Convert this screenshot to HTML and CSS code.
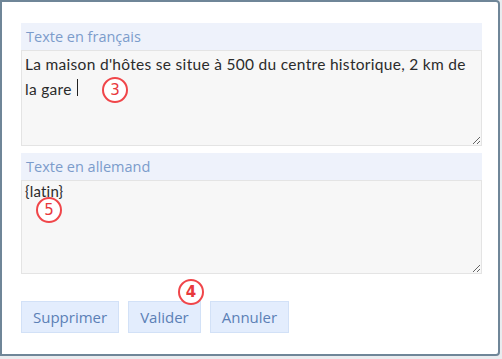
FILE: index.html
```
<!DOCTYPE html>
<html lang="fr">
<head>
    <meta charset="UTF-8" />
    <meta name="viewport" content="width=device-width, initial-scale=1.0"/>
    <title>Traduction</title>
    <link rel="stylesheet" href="styles.css">
</head>
<body>
<div class="dialog">
    <div class="field">
        <label class="field-label" for="fr">Texte en français</label>
        <div class="area-wrap">
            <textarea id="fr" class="area">La maison d'hôtes se situe à 500 du centre historique, 2 km de la gare</textarea>
            <span class="caret"></span>
            <span class="marker m3">3</span>
        </div>
    </div>
    <div class="field">
        <label class="field-label" for="de">Texte en allemand</label>
        <div class="area-wrap">
            <textarea id="de" class="area area-de">{latin}</textarea>
            <span class="marker m5">5</span>
        </div>
    </div>
    <div class="actions">
        <button class="btn">Supprimer</button>
        <button class="btn">Valider</button>
        <button class="btn">Annuler</button>
        <span class="marker m4">4</span>
    </div>
</div>
</body>
</html>
```

FILE: styles.css
```
html, body {
    margin: 0;
    padding: 0;
}
body {
    background: #e9ecef;
    width: 502px;
    height: 359px;
    font-family: "Open Sans", "Noto Sans", sans-serif;
}
.dialog {
    position: relative;
    box-sizing: border-box;
    width: 500px;
    height: 356px;
    background: #fff;
    border: 2px solid #6f8698;
    border-radius: 0 4px 4px 0;
    padding: 21px 19px 0 19px;
}
.field {
    width: 461px;
    margin-bottom: 7px;
}
.field-label {
    display: block;
    box-sizing: border-box;
    height: 27px;
    padding: 4px 5px 0;
    background: #eef2fb;
    color: #7c9ccb;
    font-size: 14.5px;
    line-height: 20px;
}
.area-wrap {
    position: relative;
}
.area {
    display: block;
    box-sizing: border-box;
    width: 461px;
    height: 96px;
    margin: 0;
    padding: 1px 3px;
    background: #f7f7f7;
    border: 1px solid #e4e4e4;
    border-radius: 0;
    color: #2b2b2b;
    font-family: "Lato", "Noto Sans", sans-serif;
    font-size: 15.5px;
    letter-spacing: 0.3px;
    line-height: 25px;
    resize: vertical;
    outline: none;
}
.area-de {
    height: 94px;
    padding-top: 0;
    font-size: 15px;
    letter-spacing: 0.2px;
    line-height: 20px;
}
.caret {
    position: absolute;
    left: 56px;
    top: 29px;
    width: 1px;
    height: 17px;
    background: #222;
}
.marker {
    position: absolute;
    box-sizing: border-box;
    width: 26px;
    height: 26px;
    border: 2px solid #f0464a;
    border-radius: 50%;
    background: #fff;
    color: #e8383c;
    font-family: "DejaVu Sans", sans-serif;
    font-size: 15px;
    line-height: 22px;
    text-align: center;
}
.m3 {
    left: 81px;
    top: 27px;
}
.m5 {
    left: 15px;
    top: 17px;
}
.actions {
    position: relative;
    display: flex;
    gap: 9px;
    margin-top: 27px;
}
.btn {
    box-sizing: border-box;
    height: 32px;
    padding: 0 11px;
    background: #e3edfd;
    border: 1px solid #d2e1f7;
    border-radius: 0;
    color: #5b80b6;
    font-family: "Open Sans", "Noto Sans", sans-serif;
    font-size: 15px;
}
.m4 {
    left: 157px;
    top: -22px;
    font-weight: bold;
}
```
